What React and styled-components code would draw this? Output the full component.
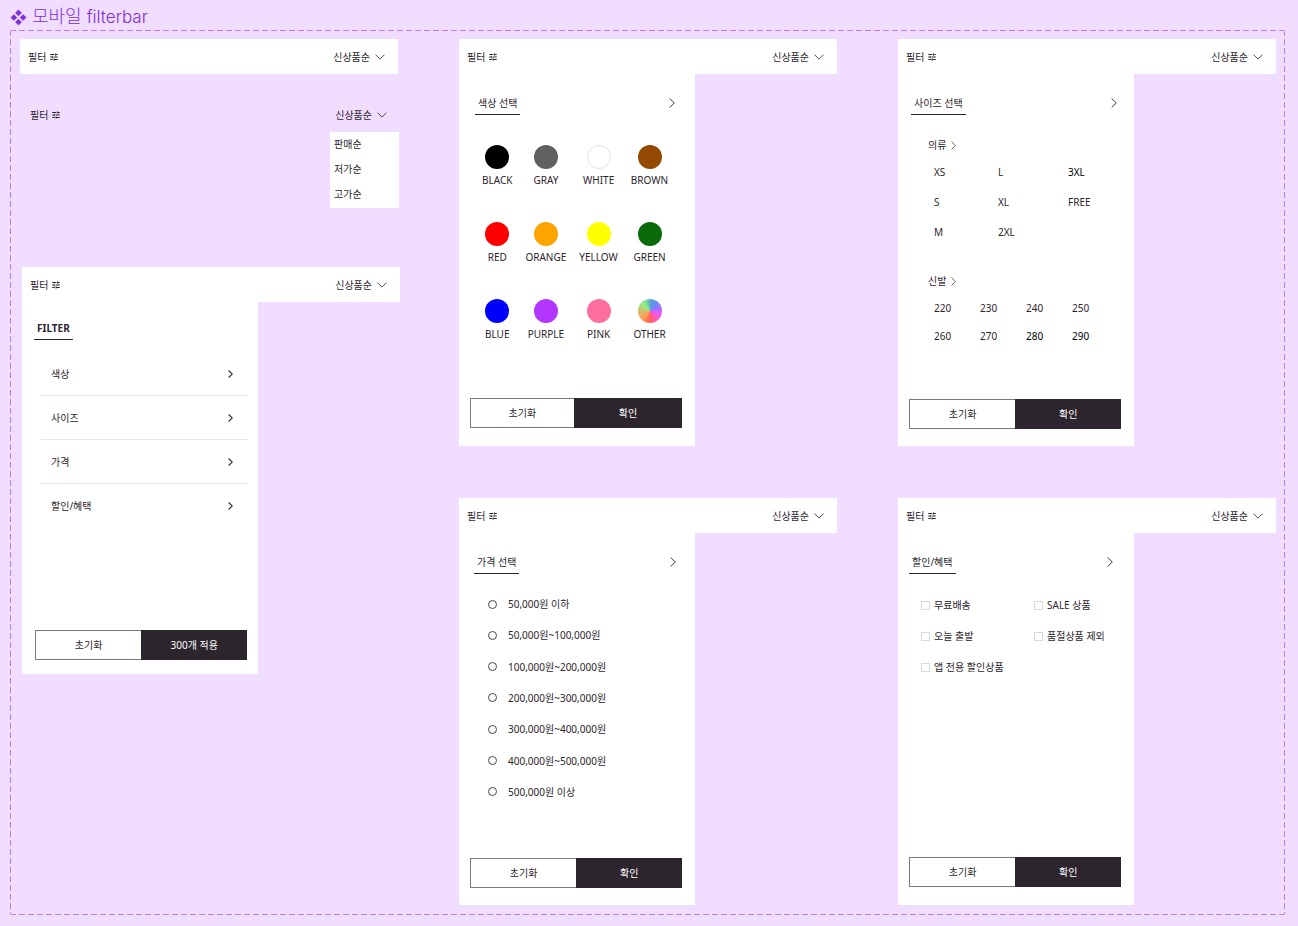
import React from "react";
import styled, { createGlobalStyle, css } from "styled-components";
import { MdTune } from "react-icons/md";

const color = {
  canvas: "#f1ddff",
  accent: "#7b2fd9",
  dash: "#b97aff",
  ink: "#2d252d",
  line: "#e8e8e8",
};

const GlobalStyle = createGlobalStyle`
  *, *::before, *::after { box-sizing: border-box; }
  body {
    margin: 0;
    background: ${color.canvas};
    color: ${color.ink};
    font: 400 10px/14px "Noto Sans", "Noto Sans CJK KR", sans-serif;
  }
  button { font: inherit; color: inherit; background: none; border: 0; padding: 0; cursor: pointer; }
  ul { list-style: none; margin: 0; padding: 0; }
  h1, h2, h3 { margin: 0; font: inherit; }
  svg { display: block; flex: none; }
`;

const Page = styled.main`
  padding: 4px 13px 11px 10px;
`;

const PageTitle = styled.h1`
  display: flex;
  align-items: center;
  gap: 5px;
  height: 26px;
  color: ${color.accent};
  font: 300 18px/26px Inter, "Noto Sans CJK KR", sans-serif;
`;

const TitleLatin = styled.span`
  font-size: 17px;
`;

const dashX = `repeating-linear-gradient(90deg, ${color.dash} 0 6px, transparent 6px 9px)`;
const dashY = `repeating-linear-gradient(180deg, ${color.dash} 0 6px, transparent 6px 9px)`;

const Frame = styled.div`
  display: grid;
  grid-template-columns: repeat(3, minmax(0, 1fr));
  gap: 61px;
  padding: 9px 9px 10px 10px;
  border-radius: 2px;
  background:
    ${dashX} top / 100% 1px no-repeat,
    ${dashX} bottom / 100% 1px no-repeat,
    ${dashY} left / 1px 100% no-repeat,
    ${dashY} right / 1px 100% no-repeat;
`;

const Column = styled.div`
  display: flex;
  flex-direction: column;
  gap: ${(p) => p.$gap}px;
`;

const Group = styled(Column)`
  margin: 0 -2px 0 2px;
`;

const Bar = styled.div`
  position: relative;
  display: flex;
  align-items: center;
  justify-content: space-between;
  height: 35px;
  padding: 0 13px 0 8px;
  background: ${(p) => (p.$clear ? "transparent" : "#fff")};
`;

const BarButton = styled.button`
  display: flex;
  align-items: center;
  gap: ${(p) => p.$gap}px;
`;

const SortMenu = styled.ul`
  position: absolute;
  top: 100%;
  right: 1px;
  display: grid;
  gap: 1px;
  width: 69px;
  padding-bottom: 2px;
  background: #fff;
`;

const SortOption = styled.button`
  width: 100%;
  height: 24px;
  padding-left: 4px;
  text-align: left;
`;

const Panel = styled.section`
  display: flex;
  flex-direction: column;
  width: 62.5%;
  min-height: 372px;
  padding: ${(p) => p.$top || 22}px 0 ${(p) => p.$bottom}px;
  background: #fff;
`;

const PanelHeader = styled.header`
  display: flex;
  align-items: flex-start;
  justify-content: space-between;
  padding: 0 ${(p) => p.$right}px 0 ${(p) => p.$left}px;
`;

const PanelTitle = styled.h2`
  padding: 0 3px 4px;
  border-bottom: 1px solid ${color.ink};
  font-weight: ${(p) => (p.$bold ? 700 : 400)};
`;

const IconButton = styled.button`
  display: flex;
  align-items: center;
  height: 14px;
`;

const Actions = styled.footer`
  display: grid;
  grid-template-columns: ${(p) => p.$split || "1fr 1fr"};
  height: 30px;
  margin: ${(p) => (p.$wideStart ? "auto 11px 0 13px" : "auto 13px 0 11px")};
`;

const ActionButton = styled.button`
  border: 1px solid #7d787d;
  border-right: 0;
  ${(p) =>
    p.$primary &&
    css`
      border: 1px solid ${color.ink};
      background: ${color.ink};
      color: #fff;
    `}
`;

const CategoryList = styled.ul`
  margin: 12px 10px 0 19px;
`;

const CategoryItem = styled.li`
  border-bottom: 1px solid ${color.line};
  &:last-child { border-bottom-color: transparent; }
`;

const CategoryButton = styled.button`
  display: flex;
  align-items: center;
  justify-content: space-between;
  width: 100%;
  height: 43px;
  padding: 0 15px 0 10px;
`;

const SwatchGrid = styled.div`
  display: grid;
  grid-template-columns: repeat(4, max-content);
  gap: 35px 13px;
  margin: 30px 0 0 23px;
`;

const SwatchButton = styled.button`
  display: flex;
  flex-direction: column;
  align-items: center;
  gap: 4px;
`;

const Dot = styled.span`
  width: 24px;
  height: 24px;
  border-radius: 50%;
  background: ${(p) => p.$fill};
  border: ${(p) => (p.$outlined ? "1px solid #e2e2e2" : "0")};
`;

const SizeSections = styled.div`
  display: grid;
  gap: 35px;
  margin: 23px 0 0 30px;
`;

const SizeHeading = styled.h3`
  display: flex;
  align-items: center;
  gap: 5px;
  margin-bottom: 13px;
`;

const SizeGrid = styled.div`
  display: grid;
  grid-template-columns: ${(p) => p.$columns};
  gap: ${(p) => p.$rowGap}px 0;
  justify-items: start;
  padding-left: 6px;
`;

const SizeButton = styled.button`
  color: ${(p) => (p.$strong ? "#000" : color.ink)};
`;

const PriceList = styled.div`
  display: flex;
  flex-direction: column;
  justify-content: space-between;
  height: 202px;
  margin: 23px 0 0 29px;
`;

const ChoiceLabel = styled.label`
  display: flex;
  align-items: center;
  gap: ${(p) => p.$gap}px;
  white-space: nowrap;
`;

const ChoiceInput = styled.input`
  appearance: none;
  flex: none;
  width: 9px;
  height: 9px;
  margin: 0;
  border: 1px solid ${(p) => (p.type === "radio" ? "#4b444b" : "#d9d9d9")};
  border-radius: ${(p) => (p.type === "radio" ? "50%" : "0")};
  &:checked { background: ${color.ink}; }
`;

const BenefitGrid = styled.div`
  display: grid;
  grid-template-columns: 113px auto;
  gap: 17px 0;
  justify-items: start;
  margin: 24px 0 0 23px;
`;

const ComponentSetIcon = () => (
  <svg width="17" height="17" viewBox="0 0 17 17" fill="currentColor" stroke="currentColor" strokeLinejoin="round" aria-hidden="true">
    <path d="M8.5 1.1 11.3 3.9 8.5 6.7 5.7 3.9Z" />
    <path d="M8.5 10.3 11.3 13.1 8.5 15.9 5.7 13.1Z" />
    <path d="M3.9 5.7 6.7 8.5 3.9 11.3 1.1 8.5Z" />
    <path d="M13.1 5.7 15.9 8.5 13.1 11.3 10.3 8.5Z" />
  </svg>
);

const ChevronDown = () => (
  <svg width="10" height="6" viewBox="0 0 10 6" fill="none" stroke="currentColor" strokeWidth="0.8" aria-hidden="true">
    <path d="M0.5 0.6 5 5.1 9.5 0.6" />
  </svg>
);

const ChevronRight = ({ width = 6, height = 10, weight = 0.9 }) => (
  <svg width={width} height={height} viewBox={`0 0 ${width} ${height}`} fill="none" stroke="currentColor" strokeWidth={weight} aria-hidden="true">
    <path d={`M0.6 0.5 ${width - 0.7} ${height / 2} 0.6 ${height - 0.5}`} />
  </svg>
);

function FilterBar({ clear, children }) {
  return (
    <Bar $clear={clear}>
      <BarButton type="button" $gap={3}>
        필터
        <MdTune size={10} aria-hidden="true" />
      </BarButton>
      <BarButton type="button" $gap={5}>
        신상품순
        <ChevronDown />
      </BarButton>
      {children}
    </Bar>
  );
}

function PanelTop({ title, left, right }) {
  return (
    <PanelHeader $left={left} $right={right}>
      <PanelTitle>{title}</PanelTitle>
      <IconButton type="button" aria-label={title}>
        <ChevronRight />
      </IconButton>
    </PanelHeader>
  );
}

function PanelActions({ confirm = "확인", split, wideStart }) {
  return (
    <Actions $split={split} $wideStart={wideStart}>
      <ActionButton type="button">초기화</ActionButton>
      <ActionButton type="button" $primary>{confirm}</ActionButton>
    </Actions>
  );
}

const sorts = ["판매순", "저가순", "고가순"];
const categories = ["색상", "사이즈", "가격", "할인/혜택"];
const swatches = [
  ["BLACK", "#000"],
  ["GRAY", "#616161"],
  ["WHITE", "#fff"],
  ["BROWN", "#944900"],
  ["RED", "#f00"],
  ["ORANGE", "#fca400"],
  ["YELLOW", "#ff0"],
  ["GREEN", "#0b6b0b"],
  ["BLUE", "#00f"],
  ["PURPLE", "#b336ff"],
  ["PINK", "#fc6e9f"],
  [
    "OTHER",
    "conic-gradient(#62a8d0 0deg, #5c90f8 35deg, #a070ff 70deg, #e45cff 100deg, #ff58c0 140deg, #ff6058 180deg, #ff9c58 220deg, #dcb868 265deg, #90f080 315deg, #7cd8a0 340deg, #62a8d0 360deg)",
  ],
];
const clothes = ["XS", "L", "3XL", "S", "XL", "FREE", "M", "2XL"];
const shoes = ["220", "230", "240", "250", "260", "270", "280", "290"];
const strongSizes = ["3XL", "280", "290"];
const prices = [
  "50,000원 이하",
  "50,000원~100,000원",
  "100,000원~200,000원",
  "200,000원~300,000원",
  "300,000원~400,000원",
  "400,000원~500,000원",
  "500,000원 이상",
];
const benefits = ["무료배송", "SALE 상품", "오늘 출발", "품절상품 제외", "앱 전용 할인상품"];

function SizeSection({ title, sizes, columns, rowGap }) {
  return (
    <div>
      <SizeHeading>
        {title}
        <ChevronRight width={5} height={9} weight={0.7} />
      </SizeHeading>
      <SizeGrid $columns={columns} $rowGap={rowGap}>
        {sizes.map((size) => (
          <SizeButton key={size} type="button" $strong={strongSizes.includes(size)}>
            {size}
          </SizeButton>
        ))}
      </SizeGrid>
    </div>
  );
}

export default function App() {
  return (
    <Page>
      <GlobalStyle />
      <PageTitle>
        <ComponentSetIcon />
        <span>
          모바일 <TitleLatin>filterbar</TitleLatin>
        </span>
      </PageTitle>
      <Frame>
        <Column $gap={23}>
          <FilterBar />
          <Group $gap={135}>
            <FilterBar clear>
              <SortMenu>
                {sorts.map((sort) => (
                  <li key={sort}>
                    <SortOption type="button">{sort}</SortOption>
                  </li>
                ))}
              </SortMenu>
            </FilterBar>
            <div>
              <FilterBar />
              <Panel $top={19} $bottom={14}>
                <PanelHeader $left={12} $right={12}>
                  <PanelTitle $bold>FILTER</PanelTitle>
                </PanelHeader>
                <CategoryList>
                  {categories.map((name) => (
                    <CategoryItem key={name}>
                      <CategoryButton type="button">
                        {name}
                        <ChevronRight width={5} height={8} weight={1.1} />
                      </CategoryButton>
                    </CategoryItem>
                  ))}
                </CategoryList>
                <PanelActions confirm="300개 적용" wideStart />
              </Panel>
            </div>
          </Group>
        </Column>

        <Column $gap={52}>
          <div>
            <FilterBar />
            <Panel $bottom={18}>
              <PanelTop title="색상 선택" left={16} right={20} />
              <SwatchGrid>
                {swatches.map(([name, fill]) => (
                  <SwatchButton key={name} type="button">
                    <Dot $fill={fill} $outlined={name === "WHITE"} />
                    {name}
                  </SwatchButton>
                ))}
              </SwatchGrid>
              <PanelActions split="103fr 108fr" />
            </Panel>
          </div>
          <div>
            <FilterBar />
            <Panel $bottom={17}>
              <PanelTop title="가격 선택" left={15} right={19} />
              <PriceList>
                {prices.map((price) => (
                  <ChoiceLabel key={price} $gap={11}>
                    <ChoiceInput type="radio" name="price" />
                    {price}
                  </ChoiceLabel>
                ))}
              </PriceList>
              <PanelActions />
            </Panel>
          </div>
        </Column>

        <Column $gap={52}>
          <div>
            <FilterBar />
            <Panel $bottom={17}>
              <PanelTop title="사이즈 선택" left={13} right={17} />
              <SizeSections>
                <SizeSection title="의류" sizes={clothes} columns="64px 70px auto" rowGap={16} />
                <SizeSection title="신발" sizes={shoes} columns="46px 46px 46px auto" rowGap={14} />
              </SizeSections>
              <PanelActions />
            </Panel>
          </div>
          <div>
            <FilterBar />
            <Panel $bottom={18}>
              <PanelTop title="할인/혜택" left={11} right={21} />
              <BenefitGrid>
                {benefits.map((benefit) => (
                  <ChoiceLabel key={benefit} $gap={4}>
                    <ChoiceInput type="checkbox" />
                    {benefit}
                  </ChoiceLabel>
                ))}
              </BenefitGrid>
              <PanelActions />
            </Panel>
          </div>
        </Column>
      </Frame>
    </Page>
  );
}
